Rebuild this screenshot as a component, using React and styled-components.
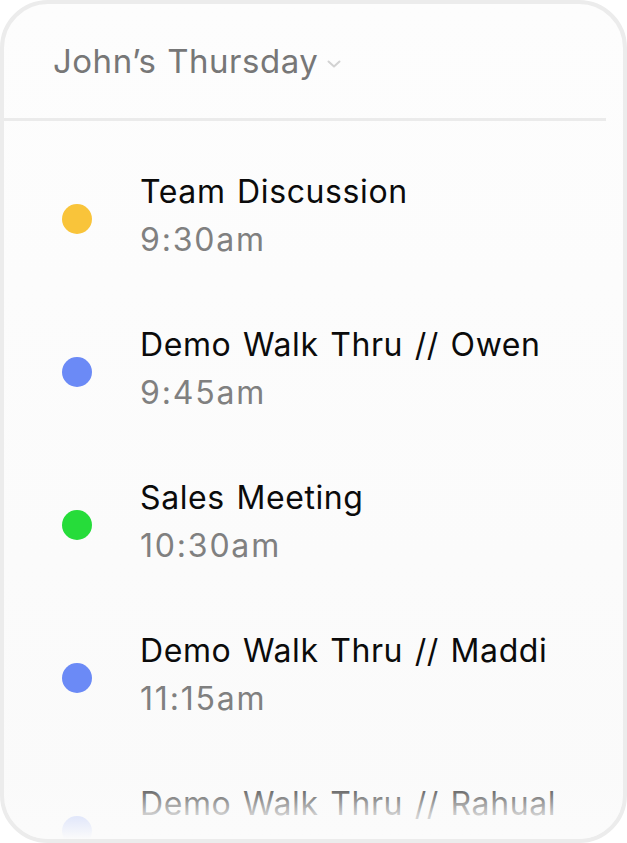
import React from 'react';
import styled, { createGlobalStyle } from 'styled-components';

const GlobalStyle = createGlobalStyle`
  html, body {
    margin: 0;
    padding: 0;
    background: #ffffff;
  }
  body {
    font-family: Inter, "Noto Sans", "Liberation Sans", sans-serif;
  }
`;

const Card = styled.div`
  box-sizing: border-box;
  width: 627px;
  height: 843px;
  border: 4px solid #ececec;
  border-radius: 48px;
  background: linear-gradient(180deg, #fdfdfd 0%, #fafafa 100%);
  overflow: hidden;
  position: relative;
`;

const Header = styled.div`
  display: flex;
  align-items: center;
  height: 114px;
  padding-left: 49px;
  border-bottom: 3px solid #ebebeb;
  margin-right: 17px;
`;

const Title = styled.div`
  font-size: 33px;
  color: #777777;
  letter-spacing: 0.5px;
  word-spacing: 1px;
`;

const Chevron = styled.svg`
  margin-left: 8px;
  margin-top: 6px;
`;

const List = styled.div`
  display: flex;
  flex-direction: column;
  gap: 57px;
  padding: 47px 0 0 58px;
`;

const Row = styled.div`
  display: flex;
  align-items: center;
  gap: 48px;
`;

const Dot = styled.span`
  width: 30px;
  height: 30px;
  margin-top: 6px;
  border-radius: 50%;
  background: ${p => p.color};
  flex-shrink: 0;
`;

const Text = styled.div`
  display: flex;
  flex-direction: column;
  min-height: 96px;
`;

const Name = styled.div`
  font-size: 32px;
  line-height: 48px;
  color: #0b0b0b;
  letter-spacing: 0.6px;
  word-spacing: 2px;
`;

const Time = styled.div`
  font-size: 32px;
  line-height: 48px;
  color: #808080;
  letter-spacing: 1.8px;
`;

const Fade = styled.div`
  position: absolute;
  left: 0;
  right: 0;
  bottom: 0;
  height: 72px;
  background: linear-gradient(180deg, rgba(251, 251, 251, 0) 0%, rgba(251, 251, 251, 0.8) 65%, #fbfbfb 100%);
  pointer-events: none;
`;

const events = [
  { name: 'Team Discussion', time: '9:30am', color: '#f9c43a' },
  { name: 'Demo Walk Thru // Owen', time: '9:45am', color: '#6b8af6' },
  { name: 'Sales Meeting', time: '10:30am', color: '#26dc3a' },
  { name: 'Demo Walk Thru // Maddi', time: '11:15am', color: '#6b8af6' },
  { name: 'Demo Walk Thru // Rahual', color: '#6b8af6' },
];

export default function App() {
  return (
    <>
      <GlobalStyle />
      <Card>
        <Header>
          <Title>John’s Thursday</Title>
          <Chevron width="16" height="10" viewBox="0 0 16 10">
            <path d="M2.5 2.5l5.5 5 5.5-5" fill="none" stroke="#d2d2d2" strokeWidth="2" strokeLinecap="round" strokeLinejoin="round" />
          </Chevron>
        </Header>
        <List>
          {events.map(e => (
            <Row key={e.name}>
              <Dot color={e.color} />
              <Text>
                <Name>{e.name}</Name>
                {e.time && <Time>{e.time}</Time>}
              </Text>
            </Row>
          ))}
        </List>
        <Fade />
      </Card>
    </>
  );
}
